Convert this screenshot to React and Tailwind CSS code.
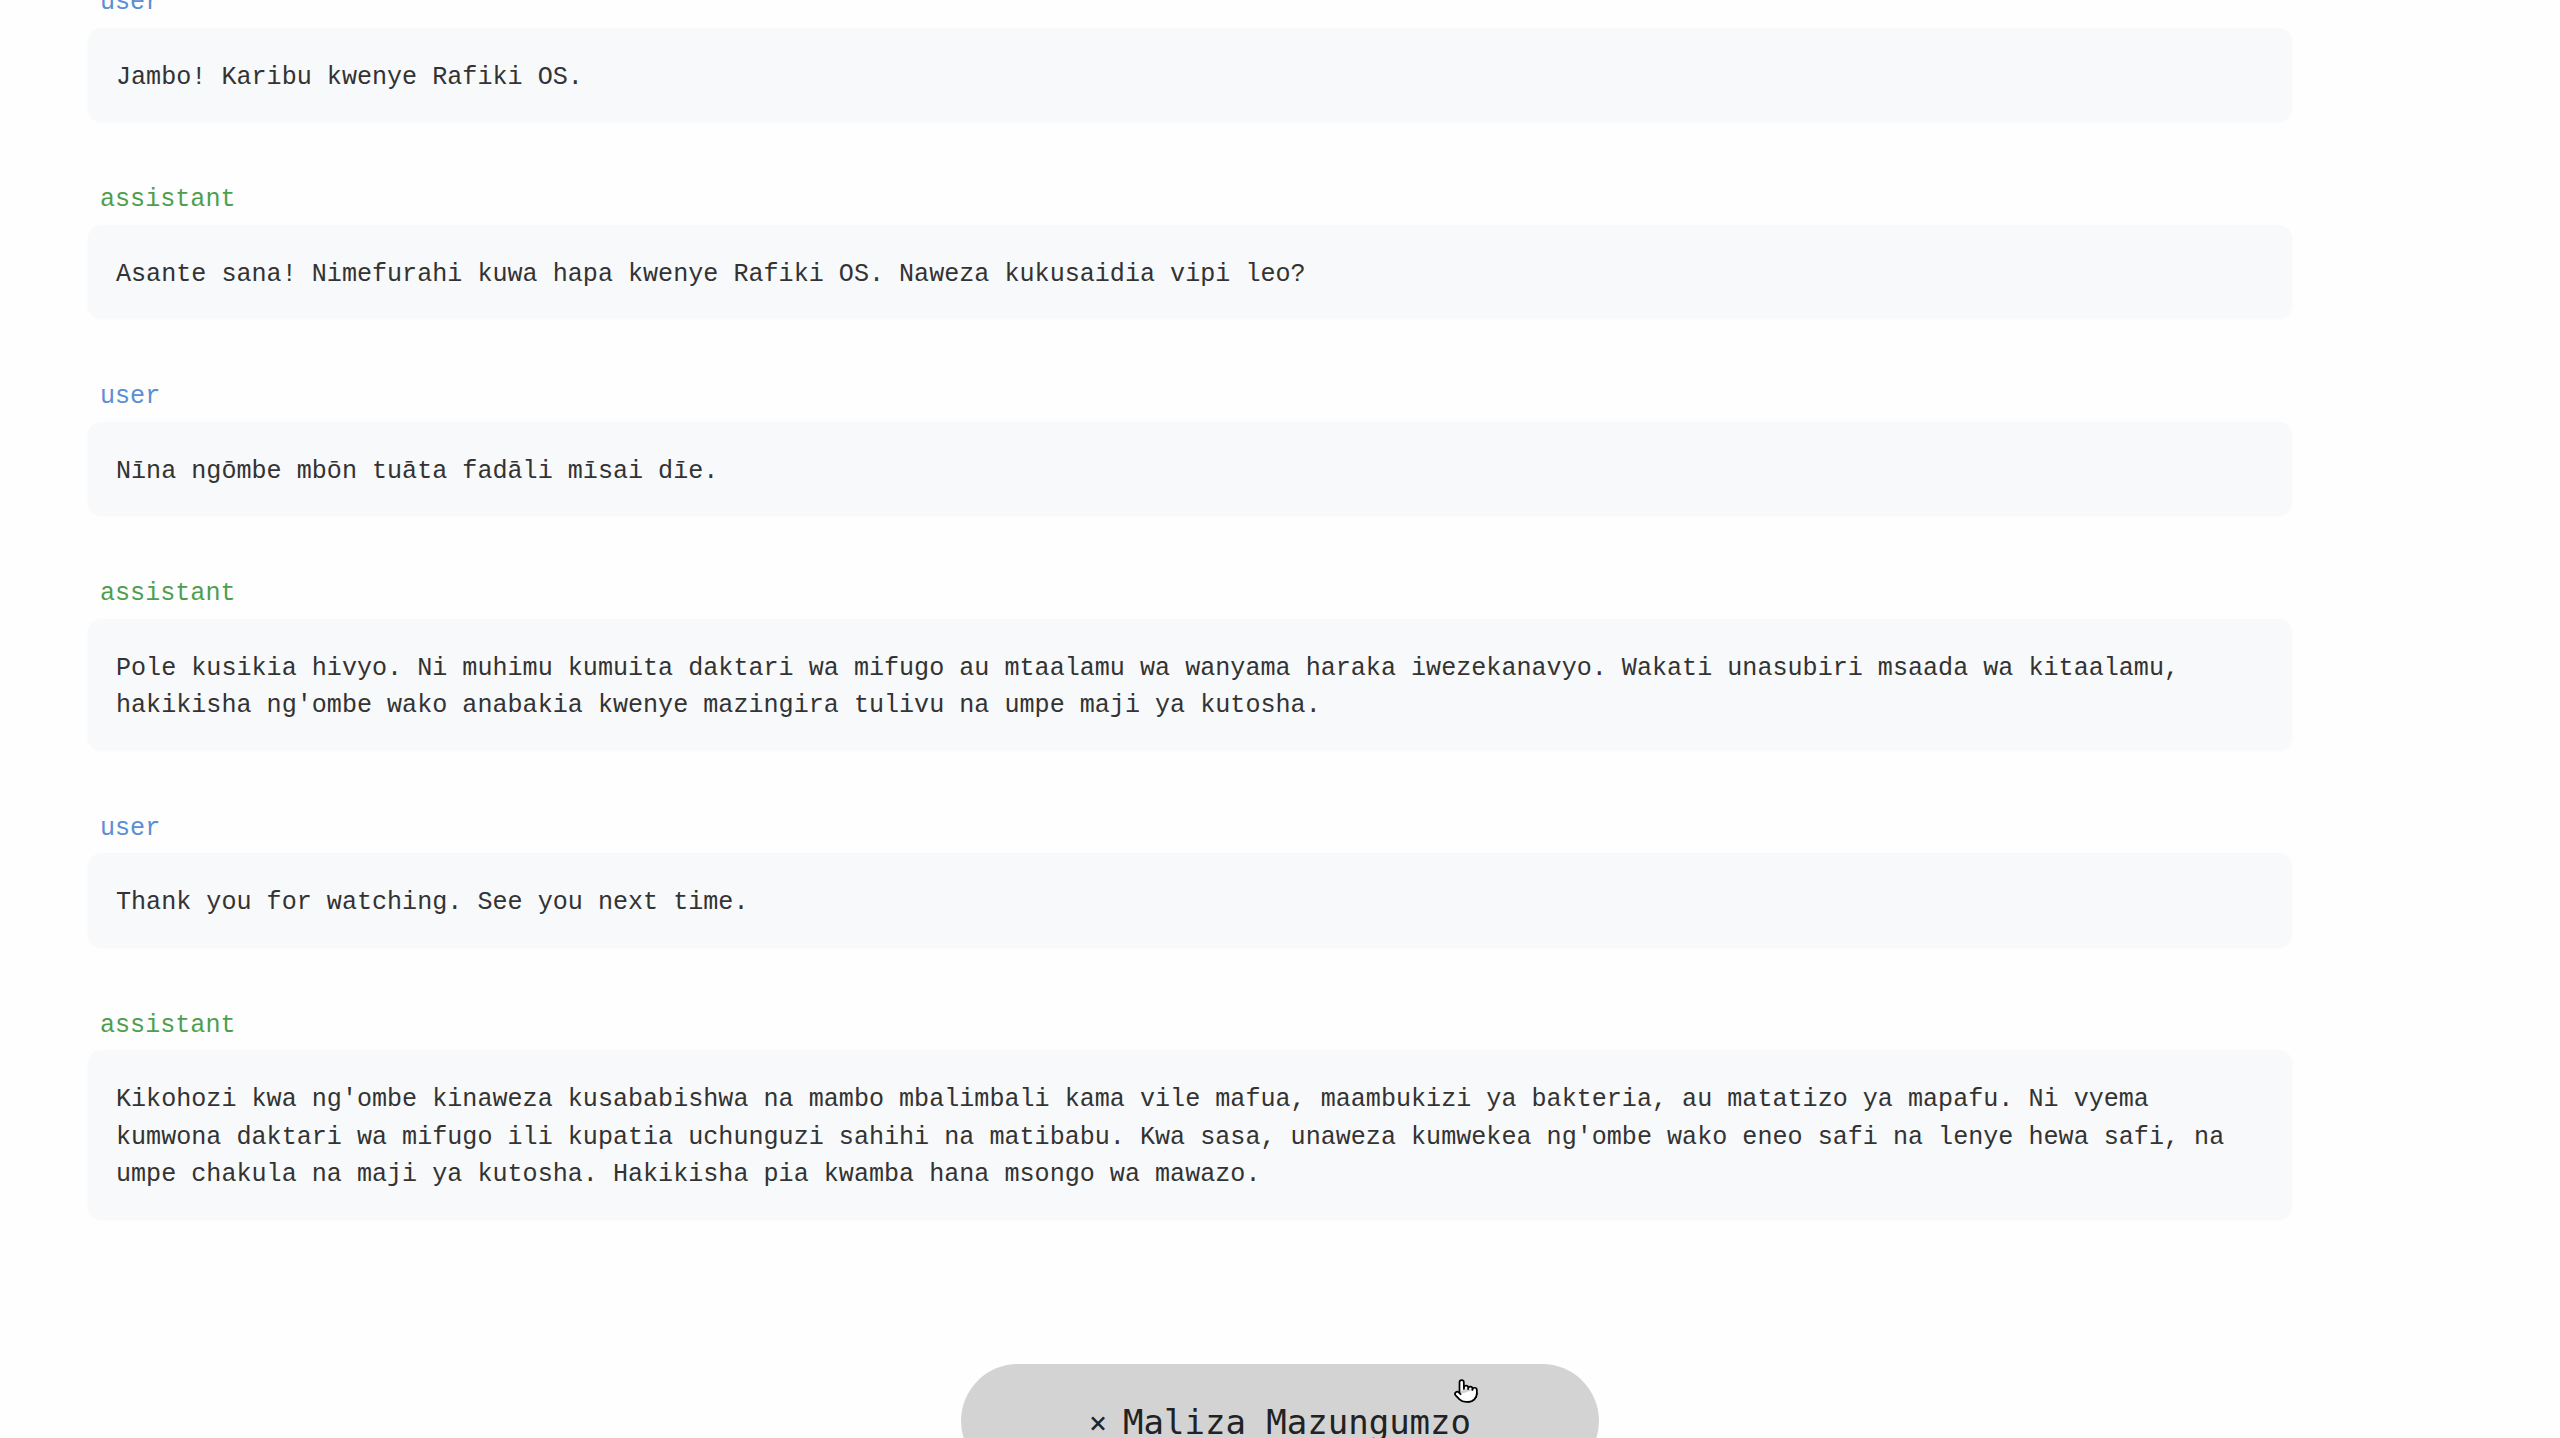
import { Pointer } from 'lucide-react';

const messages = [
  { role: 'user', text: 'Jambo! Karibu kwenye Rafiki OS.' },
  { role: 'assistant', text: 'Asante sana! Nimefurahi kuwa hapa kwenye Rafiki OS. Naweza kukusaidia vipi leo?' },
  { role: 'user', text: 'Nīna ngōmbe mbōn tuāta fadāli mīsai dīe.' },
  {
    role: 'assistant',
    text: "Pole kusikia hivyo. Ni muhimu kumuita daktari wa mifugo au mtaalamu wa wanyama haraka iwezekanavyo. Wakati unasubiri msaada wa kitaalamu, hakikisha ng'ombe wako anabakia kwenye mazingira tulivu na umpe maji ya kutosha.",
  },
  { role: 'user', text: 'Thank you for watching. See you next time.' },
  {
    role: 'assistant',
    text: "Kikohozi kwa ng'ombe kinaweza kusababishwa na mambo mbalimbali kama vile mafua, maambukizi ya bakteria, au matatizo ya mapafu. Ni vyema kumwona daktari wa mifugo ili kupatia uchunguzi sahihi na matibabu. Kwa sasa, unaweza kumwekea ng'ombe wako eneo safi na lenye hewa safi, na umpe chakula na maji ya kutosha. Hakikisha pia kwamba hana msongo wa mawazo.",
  },
];

const Message = ({ role, text }) => (
  <div className="mb-[58px] last:mb-0">
    <div
      className={`ml-[12px] mb-[6px] pt-[2px] text-[25.1px] leading-[37.5px] ${
        role === 'user' ? 'text-[#5b8fd3]' : 'text-[#4f9e4f]'
      }`}
    >
      {role}
    </div>
    <div className="rounded-[14px] bg-[#f8f9fa] px-[28px] pt-[31px] pb-[25px] text-[25.1px] leading-[37.5px] text-[#333] shadow-[0_1px_3px_rgba(0,0,0,0.03)]">
      {text}
    </div>
  </div>
);

export default function App() {
  return (
    <div className="h-[1438px] overflow-hidden bg-[#fefefe] font-['Liberation_Mono',monospace]">
      <div className="ml-[88px] mt-[-18px] w-[2204px]">
        {messages.map((m, i) => (
          <Message key={i} role={m.role} text={m.text} />
        ))}
      </div>

      <div className="mt-[145px] flex justify-center">
        <button className="relative flex h-[114px] w-[638px] items-center justify-center gap-[16px] rounded-full bg-[#d3d3d3] pt-[4px] font-['DejaVu_Sans_Mono',monospace] text-[34px] text-[#222]">
          <span className="text-[30px]">×</span>
          <span>Maliza Mazungumzo</span>
          <Pointer
            className="absolute left-[492px] top-[14px] h-[26px] w-[26px] fill-white text-black"
            strokeWidth={1.6}
          />
        </button>
      </div>
    </div>
  );
}
